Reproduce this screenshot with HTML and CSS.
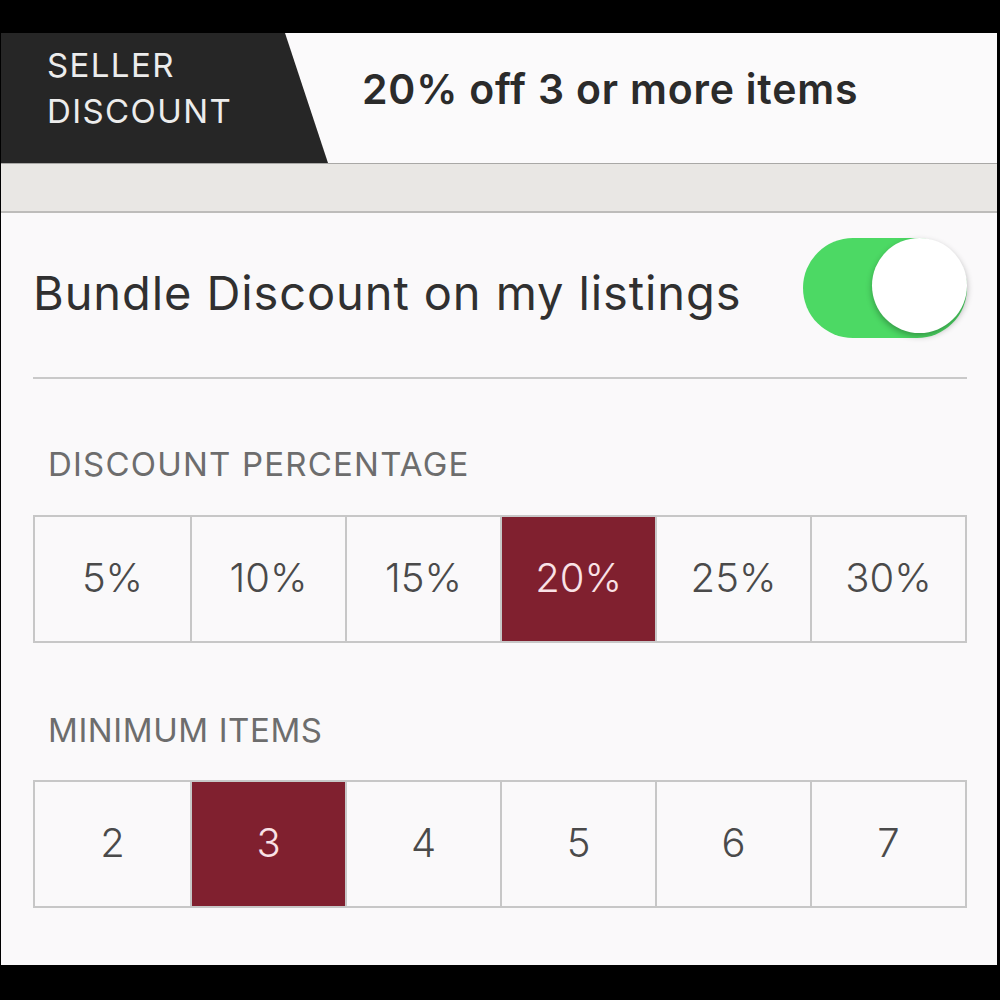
FILE: index.html
```html
<!DOCTYPE html>
<html lang="en">
<head>
    <meta charset="UTF-8">
    <meta name="viewport" content="width=device-width, initial-scale=1.0">
    <title>Bundle Discount</title>
    <link rel="stylesheet" href="styles.css">
</head>
<body>

    <div class="screen">
        <div class="page-header">
            <div class="seller-badge">SELLER<br>DISCOUNT</div>
            <h2 class="summary">20% off 3 or more items</h2>
        </div>

        <div class="band"></div>

        <div class="settings">
            <div class="toggle-row">
                <span class="toggle-label">Bundle Discount on my listings</span>
                <div class="switch on">
                    <div class="knob"></div>
                </div>
            </div>

            <div class="section-label">DISCOUNT PERCENTAGE</div>
            <div class="segments">
                <div class="segment">5%</div>
                <div class="segment">10%</div>
                <div class="segment">15%</div>
                <div class="segment selected">20%</div>
                <div class="segment">25%</div>
                <div class="segment">30%</div>
            </div>

            <div class="section-label second">MINIMUM ITEMS</div>
            <div class="segments">
                <div class="segment">2</div>
                <div class="segment selected">3</div>
                <div class="segment">4</div>
                <div class="segment">5</div>
                <div class="segment">6</div>
                <div class="segment">7</div>
            </div>
        </div>
    </div>

</body>
</html>
```

FILE: styles.css
```css
body {
    font-family: Inter, "Liberation Sans", sans-serif;
    margin: 0;
    padding: 0;
    background-color: #000;
}

.screen {
    width: 996px;
    height: 932px;
    margin: 33px 0 0 1px;
    background-color: #faf9fa;
    overflow: hidden;
}

.page-header {
    display: flex;
    height: 130px;
    background-color: #fbfafb;
}

.seller-badge {
    width: 327px;
    box-sizing: border-box;
    padding: 9px 0 0 46px;
    background-color: #262626;
    color: #ececec;
    font-size: 33px;
    line-height: 46px;
    letter-spacing: 1.4px;
    clip-path: polygon(0 0, 284px 0, 100% 100%, 0 100%);
}

.summary {
    margin: 0 0 0 34px;
    padding-top: 31px;
    font-size: 41px;
    line-height: 50px;
    font-weight: 600;
    letter-spacing: 0.8px;
    color: #2b2b2b;
}

.band {
    height: 47px;
    background-color: #e9e7e4;
    border-top: 1px solid #a9a8a6;
    border-bottom: 2px solid #bdbcba;
}

.settings {
    padding: 0 30px 0 32px;
}

.toggle-row {
    display: flex;
    justify-content: space-between;
    align-items: center;
    padding: 25px 0 39px;
    border-bottom: 2px solid #c9c9c9;
}

.toggle-label {
    margin-top: 10px;
    font-size: 47px;
    line-height: 56px;
    letter-spacing: 0.9px;
    color: #303030;
}

.switch {
    position: relative;
    width: 164px;
    height: 100px;
    border-radius: 50px;
    background-color: #4cd964;
}

.knob {
    position: absolute;
    top: 0;
    right: 0;
    width: 95px;
    height: 95px;
    border-radius: 50%;
    background-color: #fff;
    box-shadow: 0 3px 6px rgba(0, 0, 0, 0.3);
}

.section-label {
    margin: 65px 0 31px 15px;
    font-size: 33px;
    line-height: 40px;
    letter-spacing: 1.2px;
    color: #6d6d6d;
}

.section-label.second {
    margin-top: 67px;
    margin-bottom: 30px;
    letter-spacing: 0.6px;
}

.segments {
    display: grid;
    grid-template-columns: repeat(6, 1fr);
    height: 124px;
    border: 2px solid #c7c7c7;
}

.segment {
    display: flex;
    align-items: center;
    justify-content: center;
    padding-bottom: 4px;
    border-left: 2px solid #c7c7c7;
    font-size: 40px;
    font-weight: 300;
    color: #4a4a4a;
}

.segment:first-child {
    border-left: none;
}

.segment.selected {
    background-color: #80202f;
    color: #f9e2e6;
}
```
